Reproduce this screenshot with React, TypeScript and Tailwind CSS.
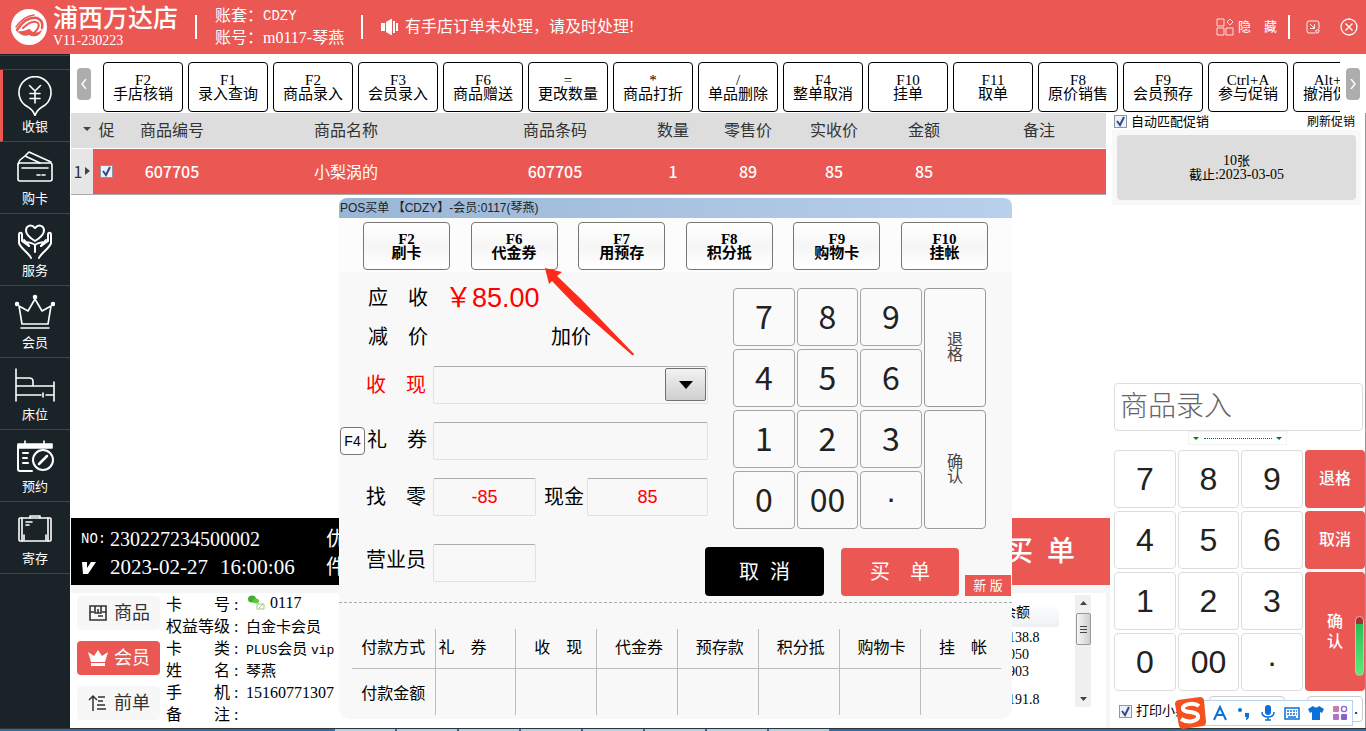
import React, { useState } from 'react';
import clsx from 'clsx';

type NavItem = {
  label: string;
  icon: React.ReactNode;
};

type ShortcutKey = {
  hotkey: string;
  label: string;
};

const NAV_ITEMS: NavItem[] = [
  {
    label: '收银',
    icon: (
      <>
        <path d="M20 39.5c-1.500-4-3.500-6.500-7-8.500A16 16 0 1 1 27 31c-3.500 2-5.500 4.500-7 8.500z" />
        <path d="M14.500 9.500l5.500 5.500 5.500-5.500M15 17.500h10M15 22.500h10M20 15v12" />
      </>
    ),
  },
  {
    label: '购卡',
    icon: (
      <>
        <rect x="3" y="15" width="34" height="18" rx="2" />
        <path d="M3 16l2-4 5-4 15 7M10 8l4-4 22 10M7 20h26" />
        <path d="M22 27h3M27 27h3" />
      </>
    ),
  },
  {
    label: '服务',
    icon: (
      <g strokeWidth="2">
        <path d="M20 21c-5-3-9-6-9-10.500C11 6 16 3.500 20 8c4-4.500 9-2 9 2.500C29 15 25 18 20 21z" />
        <path d="M16 38c-2-5-11-10-12-15V15c0-3 3-3 3 0v6l7 5M24 38c2-5 11-10 12-15V15c0-3-3-3-3 0v6l-7 5" />
        <path d="M20 32v-7c-2-2-6-2.500-9-3M20 25c2-2 6-2.500 9-3M9 20l5 6M31 20l-5 6" />
      </g>
    ),
  },
  {
    label: '会员',
    icon: (
      <>
        <path d="M7 32L4 14l9 5 7-12 7 12 9-5-3 18zM6 36h28" />
        <circle cx="2" cy="12" r="1.500" fill="currentColor" />
        <circle cx="20" cy="5" r="1.500" fill="currentColor" />
        <circle cx="38" cy="12" r="1.500" fill="currentColor" />
      </>
    ),
  },
  {
    label: '床位',
    icon: (
      <path d="M1 5v32M1 14h13q4 0 4 3v5M1 22h38M39 18v19M1 31h25M31 31h8M28 29v4" />
    ),
  },
  {
    label: '预约',
    icon: (
      <>
        <path d="M3 8h34v4H3zM10 5v5M29 5v5" fill="currentColor" />
        <path d="M3 10v23q0 2 2 2h12M8 17h5M8 22h4M8 27h5" strokeWidth="2" />
        <circle cx="28" cy="24" r="10" strokeWidth="2" />
        <path d="M24 28l8-8" strokeWidth="2.500" />
      </>
    ),
  },
  {
    label: '寄存',
    icon: (
      <>
        <rect x="4" y="10" width="32" height="23" rx="1" />
        <path d="M7 10v23M33 10v23M15 10V8h10v2M11 14h6M11 17h3" />
        <path d="M9 27v5M31 27v5" />
      </>
    ),
  },
];

const TOOLBAR: ShortcutKey[] = [
  { hotkey: 'F2', label: '手店核销' },
  { hotkey: 'F1', label: '录入查询' },
  { hotkey: 'F2', label: '商品录入' },
  { hotkey: 'F3', label: '会员录入' },
  { hotkey: 'F6', label: '商品赠送' },
  { hotkey: '=', label: '更改数量' },
  { hotkey: '*', label: '商品打折' },
  { hotkey: '/', label: '单品删除' },
  { hotkey: 'F4', label: '整单取消' },
  { hotkey: 'F10', label: '挂单' },
  { hotkey: 'F11', label: '取单' },
  { hotkey: 'F8', label: '原价销售' },
  { hotkey: 'F9', label: '会员预存' },
  { hotkey: 'Ctrl+A', label: '参与促销' },
  { hotkey: 'Alt+A', label: '撤消促销' },
];

const PAY_METHODS: ShortcutKey[] = [
  { hotkey: 'F2', label: '刷卡' },
  { hotkey: 'F6', label: '代金券' },
  { hotkey: 'F7', label: '用预存' },
  { hotkey: 'F8', label: '积分抵' },
  { hotkey: 'F9', label: '购物卡' },
  { hotkey: 'F10', label: '挂帐' },
];

const PAY_COLUMNS = ['收　现', '代金券', '预存款', '积分抵', '购物卡', '挂　帐'];

const SERIF = "font-['Liberation_Serif','Noto_Sans_CJK_SC',serif]";
const SANS = "font-['Liberation_Sans','Noto_Sans_CJK_SC',sans-serif]";
const MONO = "font-['Liberation_Mono','Noto_Sans_CJK_SC',monospace]";

const Header: React.FC = () => (
  <header className="flex h-[54px] shrink-0 items-center bg-[#eb5752] pr-2 pl-[11px] text-white">
    <svg viewBox="0 0 36 36" className="size-9 shrink-0">
      <circle cx="18" cy="18" r="18" fill="#fff" />
      <g fill="none" stroke="#eb5752" strokeLinecap="round">
        <path d="M5 18C9 12 15 7 23 6" strokeWidth="1.500" />
        <path d="M6 21C11 13 18 8 26 9c5 2 6 6 5 10" strokeWidth="2.500" />
        <path d="M12 19c5-5 11-8 15-5 2 3 0 6-3 9" strokeWidth="2" />
      </g>
      <path d="M6 22c6 1 9-1 12-2 2 0 2 3 5 3 3 1 6 0 8-3-1 7-8 9-13 6-4 2-9 0-12-4z" fill="#eb5752" />
    </svg>
    <div className="ml-[6px] w-[142px]">
      <h1 className="text-[25px] leading-7 font-medium whitespace-nowrap">浦西万达店</h1>
      <p className="text-sm leading-4">V11-230223</p>
    </div>
    <div className="h-6 w-[2px] bg-white" />
    <dl className="ml-[18px] w-[146px] text-base leading-[22px]">
      <div className="flex whitespace-nowrap">
        <dt>账套：</dt>
        <dd className={clsx(MONO, 'text-sm leading-[22px]')}>CDZY</dd>
      </div>
      <div className="flex whitespace-nowrap">
        <dt>账号：</dt>
        <dd>m0117-琴燕</dd>
      </div>
    </dl>
    <div className="h-6 w-[2px] bg-white" />
    <svg viewBox="0 0 18 16" className="ml-[18px] h-4 w-[18px]" fill="currentColor">
      <path d="M0 4h4v8H0zM5 3l5-3h1v16h-1l-5-3zM12 2h2v12h-2zM15 4h2v8h-2z" />
    </svg>
    <p className="ml-[6px] text-base">有手店订单未处理，请及时处理!</p>

    <button type="button" className="ml-auto flex items-center gap-1 text-[13px]">
      <svg viewBox="0 0 18 18" className="size-[18px]" fill="none" stroke="currentColor" strokeOpacity="0.800">
        <path d="M1 1h7v7H1zM1 10h7v7H1zM10 10h7v7h-7zM14 1l3 3-3 3-3-3z" />
      </svg>
      <span className="whitespace-pre">隐　藏</span>
    </button>
    <div className="ml-[11px] h-6 w-[2px] bg-white" />
    <button type="button" aria-label="最小化" className="ml-4">
      <svg viewBox="0 0 14 14" className="size-[14px]" fill="none" stroke="currentColor" strokeOpacity="0.900">
        <path d="M13 9V3q0-2-2-2H3Q1 1 1 3v8q0 2 2 2h6M4 4l4 4M8.500 4v4.500H4M10 13v-3h3v1q0 2-2 2z" />
      </svg>
    </button>
    <button type="button" aria-label="关闭" className="ml-5">
      <svg viewBox="0 0 18 18" className="size-[18px]" fill="none" stroke="currentColor" strokeWidth="1.300">
        <circle cx="9" cy="9" r="8" />
        <path d="M5.500 5.500l7 7M12.500 5.500l-7 7" />
      </svg>
    </button>
  </header>
);

const Sidebar: React.FC = () => (
  <nav className="w-[70px] shrink-0 bg-[#1a2428] pt-px">
    <div className="h-[15px] border-y border-[#3a464b]" />
    {NAV_ITEMS.map((item, index) => (
      <a
        key={item.label}
        href="#"
        className={clsx(
          'flex h-[72px] flex-col items-center border-b border-b-[#3a464b] pt-[6px] text-[13px] text-white',
          index === 0 && 'border-l-[3px] border-l-[#eb5752] pr-[3px]',
        )}
      >
        <svg
          viewBox="0 0 40 40"
          className="size-10"
          fill="none"
          stroke="currentColor"
          strokeWidth="1.600"
          strokeLinecap="round"
          strokeLinejoin="round"
        >
          {item.icon}
        </svg>
        <span className="leading-[22px]">{item.label}</span>
      </a>
    ))}
  </nav>
);

const Toolbar: React.FC = () => (
  <div className="flex h-[59px] shrink-0 items-start bg-white pr-[6px] pl-[7px]">
    <button type="button" aria-label="向左" className="mt-[14px] flex h-8 w-[14px] shrink-0 items-center justify-center rounded bg-[#adadad]">
      <svg viewBox="0 0 6 10" className="h-[10px] w-[6px]" fill="none" stroke="#fff" strokeWidth="1.500">
        <path d="M5 0L1 5l4 5" />
      </svg>
    </button>
    <div className="mt-2 mr-[6px] ml-3 flex min-w-0 flex-1 gap-[5px] overflow-hidden">
      {TOOLBAR.map((key, index) => (
        <button
          key={index}
          type="button"
          className="h-[50px] w-20 shrink-0 rounded border border-black bg-white text-[15px] leading-[14px] text-black"
        >
          <span className="block">{key.hotkey}</span>
          <span className="block whitespace-nowrap">{key.label}</span>
        </button>
      ))}
    </div>
    <button type="button" aria-label="向右" className="mt-[14px] flex h-8 w-[14px] shrink-0 items-center justify-center rounded bg-[#adadad]">
      <svg viewBox="0 0 6 10" className="h-[10px] w-[6px]" fill="none" stroke="#fff" strokeWidth="1.500">
        <path d="M1 0l4 5-4 5" />
      </svg>
    </button>
  </div>
);

const CheckBox: React.FC<{ label: string; hideLabel?: boolean }> = ({ label, hideLabel }) => {
  const [checked, setChecked] = useState(true);
  return (
    <label className="inline-flex items-center gap-1">
      <span className="relative inline-flex size-[13px]">
        <input
          type="checkbox"
          aria-label={label}
          checked={checked}
          onChange={(e) => setChecked(e.target.checked)}
          className="size-[13px] appearance-none border border-[#8a97a5] bg-[#eef1f5]"
        />
        {checked && (
          <svg viewBox="0 0 13 13" className="pointer-events-none absolute inset-0" fill="none" stroke="#34488f" strokeWidth="2">
            <path d="M3 6l3 4 4-8" />
          </svg>
        )}
      </span>
      {!hideLabel && <span className="whitespace-nowrap">{label}</span>}
    </label>
  );
};

const OrderTable: React.FC = () => (
  <table className="mr-1 table-fixed border-collapse text-base text-[#333]">
    <colgroup>
      <col className="w-[22px]" />
      <col className="w-[27px]" />
      <col className="w-[104px]" />
      <col />
      <col className="w-[174px]" />
      <col className="w-[62px]" />
      <col className="w-[88px]" />
      <col className="w-[84px]" />
      <col className="w-[96px]" />
      <col className="w-[134px]" />
    </colgroup>
    <thead>
      <tr className="h-[35px] border-b border-white bg-[#ddd] [&>th]:p-0 [&>th]:pt-[2px] [&>th]:font-normal">
        <th>
          <svg viewBox="0 0 8 4" className="mr-[2px] mb-1 ml-auto h-1 w-2">
            <path d="M0 0h8L4 4z" fill="#444" />
          </svg>
        </th>
        <th>促</th>
        <th>商品编号</th>
        <th>商品名称</th>
        <th>商品条码</th>
        <th>数量</th>
        <th>零售价</th>
        <th>实收价</th>
        <th>金额</th>
        <th>备注</th>
      </tr>
    </thead>
    <tbody>
      <tr className="h-[46px] border-b border-[#aaa] bg-[#eb5752] text-center text-white [&>td]:p-0 [&>td]:font-['Noto_Sans_CJK_SC',sans-serif]">
        <td className="bg-[#e6e6e6] text-[#333]">
          <span className="flex items-center justify-center gap-[3px]">
            1
            <svg viewBox="0 0 5 8" className="h-2 w-[5px]">
              <path d="M0 0l5 4-5 4z" fill="#444" />
            </svg>
          </span>
        </td>
        <td>
          <CheckBox label="促" hideLabel />
        </td>
        <td className="font-medium">607705</td>
        <td>小梨涡的</td>
        <td className="font-medium">607705</td>
        <td className="font-medium">1</td>
        <td className="font-medium">89</td>
        <td className="font-medium">85</td>
        <td className="font-medium">85</td>
        <td />
      </tr>
    </tbody>
  </table>
);

const StatusBar: React.FC = () => (
  <div className="flex h-[67px] shrink-0 bg-black text-xl text-white">
    <div className="flex-1 pt-[7px] pl-[10px] leading-7">
      <div className="flex">
        <span className={clsx(MONO, 'w-[29px] text-sm leading-7')}>NO:</span>
        <span className="w-[216px]">230227234500002</span>
        <span>优惠</span>
      </div>
      <div className="flex items-center">
        <span className="w-[29px]">
          <svg viewBox="0 0 14 13" className="ml-px h-[13px] w-[14px]" fill="currentColor">
            <path d="M0 1h5v6l4-6h5L6 13H1z" />
          </svg>
        </span>
        <span className="flex w-[216px] gap-3 text-[21px] leading-7">
          <span>2023-02-27</span>
          <span>16:00:06</span>
        </span>
        <span>件数</span>
      </div>
    </div>
    <button type="button" className="w-[140px] bg-[#eb5752] text-[28px] font-medium whitespace-pre">
      买  单
    </button>
  </div>
);

const MEMBER_ROWS: { label: string; value: React.ReactNode }[] = [
  {
    label: '卡　　号',
    value: (
      <span className="flex items-center gap-1">
        <svg viewBox="0 0 18 16" className="ml-[2px] h-4 w-[18px]">
          <ellipse cx="4" cy="4" rx="4" ry="3.500" fill="#3fae2a" />
          <ellipse cx="8" cy="6" rx="3" ry="2.500" fill="#62c24a" />
          <path d="M9 9h7v5H9zM11 13l4-4" fill="none" stroke="#9dc48c" />
        </svg>
        <span className="text-base leading-[18px]">0117</span>
      </span>
    ),
  },
  { label: '权益等级', value: '白金卡会员' },
  {
    label: '卡　　类',
    value: (
      <>
        <span className={clsx(MONO, 'text-[13px]')}>PLUS</span>会员 <span className={clsx(MONO, 'text-[13px]')}>vip</span>
      </>
    ),
  },
  { label: '姓　　名', value: '琴燕' },
  { label: '手　　机', value: <span className="text-base leading-[22px]">15160771307</span> },
  { label: '备　　注', value: '' },
];

const MemberPanel: React.FC = () => (
  <div className="mt-2 mr-1 flex h-[135px] shrink-0 bg-white pr-[15px] pl-[6px]">
    <div className="flex w-[83px] flex-col gap-[11px] pt-[3px] text-lg text-[#333]">
      <button type="button" className="flex h-[34px] items-center gap-[6px] rounded bg-[#f7f7f7] pl-[11px]">
        <svg viewBox="0 0 20 18" className="h-[18px] w-5" fill="none" stroke="currentColor" strokeWidth="1.600">
          <path d="M2 2h16v14H2zM2 8h4M14 8h4M7 2v7h3V5M13 2v7h-3M10 12h5" />
        </svg>
        商品
      </button>
      <button type="button" className="flex h-[34px] items-center gap-[6px] rounded bg-[#eb5752] pl-[11px] text-white">
        <svg viewBox="0 0 20 18" className="h-[18px] w-5" fill="currentColor">
          <path d="M0 3l6 4 4-6 4 6 6-4-3 10H3zM3 14h14v3H3z" />
        </svg>
        会员
      </button>
      <button type="button" className="flex h-[34px] items-center gap-[6px] rounded bg-[#f7f7f7] pl-[11px]">
        <svg viewBox="0 0 20 18" className="h-[18px] w-5" fill="none" stroke="currentColor" strokeWidth="1.500">
          <path d="M1 6l4-4 4 4M5 2v15M10 3h7M10 7h5M9 11h8M9 15h9" />
        </svg>
        前单
      </button>
    </div>
    <dl className="ml-[6px] w-[220px] pt-px text-[15px] leading-[22px] text-black">
      {MEMBER_ROWS.map((row) => (
        <div key={row.label} className="flex h-[22px] whitespace-nowrap">
          <dt className="w-[80px] text-base leading-[22px]">
            {row.label}
            <span className="pl-1">:</span>
          </dt>
          <dd>{row.value}</dd>
        </div>
      ))}
    </dl>
    <div className="ml-auto w-[57px] pt-[11px] text-sm leading-[17px] text-black">
      <div className="h-[23px] bg-linear-to-b from-white to-[#eef0f3] leading-[18px]">余额</div>
      <div className="pt-[2px] pl-[6px]">
        <p>138.8</p>
        <p>050</p>
        <p>903</p>
        <p className="pt-[11px]">191.8</p>
      </div>
    </div>
    <div className="mt-[2px] ml-4 flex h-[112px] w-4 flex-col items-center bg-[#f0f0f0] py-[6px]">
      <svg viewBox="0 0 7 4" className="h-1 w-[7px] shrink-0">
        <path d="M0 4l3.500-4L7 4z" fill="#444" />
      </svg>
      <div className="mt-2 flex h-8 w-[15px] flex-col items-center justify-center gap-[2px] rounded-xs border border-[#999] bg-linear-to-r from-[#f5f5f5] to-[#cfcfcf]">
        <i className="h-px w-[7px] bg-[#444]" />
        <i className="h-px w-[7px] bg-[#444]" />
        <i className="h-px w-[7px] bg-[#444]" />
      </div>
      <svg viewBox="0 0 7 4" className="mt-auto h-1 w-[7px] shrink-0">
        <path d="M0 0h7L3.500 4z" fill="#444" />
      </svg>
    </div>
  </div>
);

const RightPanel: React.FC = () => {
  const keyStyle = 'rounded border border-[#ddd] bg-white text-[32px] text-[#222]';
  const redKey = 'rounded bg-[#eb5752] text-base font-medium text-white';
  return (
    <aside className="flex w-[256px] shrink-0 flex-col border-r border-[#999] bg-white pl-[2px] text-black">
      <div className="flex h-[17px] items-center justify-between pr-[10px] pl-[2px] text-[13px]">
        <CheckBox label="自动匹配促销" />
        <button type="button" className="text-xs">刷新促销</button>
      </div>
      <div className="mr-1 bg-[#f8f8f8] p-[5px]">
        <button type="button" className="h-[65px] w-full rounded bg-[#ddd] text-sm leading-[14px]">
          <span className="block">10<span className="text-[13px]">张</span></span>
          <span className="block"><span className="text-[13px]">截止</span>:2023-03-05</span>
        </button>
      </div>

      <div className="mt-auto pl-[2px]">
        <input
          type="text"
          aria-label="商品录入"
          placeholder="商品录入"
          className="h-12 w-[249px] rounded border border-[#ddd] bg-white px-[5px] text-[28px] font-light placeholder:text-[#666]"
        />
        <div className="ml-[74px] flex h-[14px] w-[99px] items-center justify-between border border-[#f2f2f2] px-1">
          <svg viewBox="0 0 6 3" className="h-[3px] w-[6px]"><path d="M0 0h6L3 3z" fill="#0a7d12" /></svg>
          <i className="w-[68px] border-t border-dotted border-[#0a7d12]" />
          <svg viewBox="0 0 6 3" className="h-[3px] w-[6px]"><path d="M0 0h6L3 3z" fill="#0a7d12" /></svg>
        </div>
        <div className={clsx('mt-[5px] grid auto-rows-[58px] grid-cols-[62px_61px_62px_1fr] gap-x-[2px] gap-y-[3px]', SANS)}>
          <button type="button" className={keyStyle}>7</button>
          <button type="button" className={keyStyle}>8</button>
          <button type="button" className={keyStyle}>9</button>
          <button type="button" className={redKey}>退格</button>
          <button type="button" className={keyStyle}>4</button>
          <button type="button" className={keyStyle}>5</button>
          <button type="button" className={keyStyle}>6</button>
          <button type="button" className={redKey}>取消</button>
          <button type="button" className={keyStyle}>1</button>
          <button type="button" className={keyStyle}>2</button>
          <button type="button" className={keyStyle}>3</button>
          <button type="button" className={clsx(redKey, 'row-span-2 px-5 leading-5')}>确认</button>
          <button type="button" className={keyStyle}>0</button>
          <button type="button" className={keyStyle}>00</button>
          <button type="button" className={keyStyle}>·</button>
        </div>
        <div className="flex h-[37px] items-start pt-[5px]">
          <div className="ml-[5px] flex h-[30px] w-[90px] items-center text-[13px]">
            <CheckBox label="打印小票" />
          </div>
          <button type="button" aria-label="交班" className="h-[26px] w-[76px] rounded border border-[#ccc] bg-white" />
          <button type="button" aria-label="更多" className="mr-[2px] ml-auto h-[26px] w-[56px] rounded border border-[#ccc] bg-white pr-1 text-right text-base">.</button>
        </div>
      </div>
    </aside>
  );
};

const PaymentDialog: React.FC = () => {
  const [change, setChange] = useState('-85');
  const [cash, setCash] = useState('85');
  const label = 'w-[67px] shrink-0 whitespace-pre';
  const field =
    'h-[38px] rounded-xs border border-[#dfe1ea] border-t-[#abadb3] bg-[#f8f8f8] text-center text-lg text-[#f00]';
  const keyStyle = 'rounded border border-[#a5a5a5] bg-[#fafafa] pb-1 text-[32px] text-[#222]';
  const sideKey = 'row-span-2 rounded border border-[#999] bg-[#fafafa] px-5 pb-1 text-base leading-[15px] text-[#444]';

  return (
    <section
      role="dialog"
      aria-label="POS买单"
      className={clsx('absolute top-[198px] left-[339px] w-[673px] rounded-xl bg-[#f8f8f8] text-black', SANS)}
    >
      <h2 className="h-5 rounded-t-lg bg-linear-to-r from-[#9ab6d6] to-[#b9d0ed] pl-px text-[12px] leading-5 text-[#222]">
        POS买单 【CDZY】-会员:0117(琴燕)
      </h2>
      <div className={clsx('flex justify-between bg-[#fcfcfc] px-6 pt-1 pb-[2px]', SERIF)}>
        {PAY_METHODS.map((key) => (
          <button
            key={key.hotkey}
            type="button"
            className="h-12 w-[87px] rounded border border-[#777] bg-linear-to-b from-white via-[#f6f6f6] to-white text-[15px] leading-[14px] font-bold"
          >
            <span className="block">{key.hotkey}</span>
            <span className="block">{key.label}</span>
          </button>
        ))}
      </div>

      <div className="flex">
        <div className="w-[369px] pt-2 pl-[27px] text-[20px]">
          <div className="flex h-9 items-center pl-[2px]">
            <span className={label}>应　收</span>
            <span className="pl-[10px] text-[27px] text-[#f00]">￥85.00</span>
          </div>
          <div className="flex h-[42px] items-center pl-[2px]">
            <span className={label}>减　价</span>
            <span className="ml-[116px]">加价</span>
          </div>
          <div className="mt-2 flex items-center">
            <label htmlFor="pay-cash" className={clsx(label, 'text-[#f00]')}>收　现</label>
            <span className="relative flex flex-1">
              <select
                id="pay-cash"
                className="h-[38px] w-full appearance-none rounded-xs border border-[#dfe1ea] border-t-[#abadb3] bg-[#f8f8f8]"
              />
              <span className="pointer-events-none absolute top-[2px] right-[2px] flex h-[33px] w-[41px] items-center justify-center rounded-xs border border-[#707070] bg-linear-to-b from-[#f2f2f2] to-[#cfcfcf]">
                <svg viewBox="0 0 14 8" className="h-2 w-[14px]"><path d="M0 0h14L7 8z" /></svg>
              </span>
            </span>
          </div>
          <div className="mt-[18px] -ml-[27px] flex items-center">
            <button type="button" className="mr-px ml-px h-7 w-[25px] shrink-0 rounded border border-[#777] bg-[#fcfcfc] text-sm">F4</button>
            <label htmlFor="pay-gift" className={clsx(label, 'pb-[2px] pl-px')}>礼　券</label>
            <input id="pay-gift" type="text" className={clsx(field, 'min-w-0 flex-1')} />
          </div>
          <div className="mt-[18px] flex items-center">
            <label htmlFor="pay-change" className={label}>找　零</label>
            <input
              id="pay-change"
              type="text"
              value={change}
              onChange={(e) => setChange(e.target.value)}
              className={clsx(field, 'w-[103px]')}
            />
            <label htmlFor="pay-money" className="w-[51px] pl-2">现金</label>
            <input
              id="pay-money"
              type="text"
              value={cash}
              onChange={(e) => setCash(e.target.value)}
              className={clsx(field, 'min-w-0 flex-1')}
            />
          </div>
        </div>

        <div className="ml-[25px] grid h-[257px] grid-cols-[62px_61px_62px_62px] auto-rows-[58px] gap-x-[2px] gap-y-[3px] pt-4 font-['Noto_Sans_CJK_SC',sans-serif]">
          <button type="button" className={keyStyle}>7</button>
          <button type="button" className={keyStyle}>8</button>
          <button type="button" className={keyStyle}>9</button>
          <button type="button" className={sideKey}>退格</button>
          <button type="button" className={keyStyle}>4</button>
          <button type="button" className={keyStyle}>5</button>
          <button type="button" className={keyStyle}>6</button>
          <button type="button" className={keyStyle}>1</button>
          <button type="button" className={keyStyle}>2</button>
          <button type="button" className={keyStyle}>3</button>
          <button type="button" className={sideKey}>确认</button>
          <button type="button" className={keyStyle}>0</button>
          <button type="button" className={keyStyle}>00</button>
          <button type="button" className={clsx(keyStyle, SANS)}>·</button>
        </div>
      </div>

      <div className="flex h-[74px] items-start border-b border-dashed border-[#aaa] pt-[15px] pr-px pl-[27px] text-[20px]">
        <div className="flex items-start">
          <label htmlFor="pay-clerk" className={clsx(label, 'leading-8')}>营业员</label>
          <input id="pay-clerk" type="text" className={clsx(field, 'w-[103px]')} />
        </div>
        <div className="ml-auto flex items-end pt-[3px] text-white">
          <button type="button" className="h-[49px] w-[119px] rounded bg-black whitespace-pre">取  消</button>
          <button type="button" className="ml-[17px] h-12 w-[118px] rounded bg-[#eb5752] whitespace-pre">买　单</button>
          <button type="button" className="ml-[6px] h-[21px] w-[46px] bg-[#eb5752] text-[13px] whitespace-pre">新 版</button>
        </div>
      </div>

      <table className="mx-[13px] mt-[26px] mb-[4px] w-[649px] table-fixed border-collapse text-right text-base [&_th]:font-normal">
        <colgroup>
          <col className="w-[83px]" />
        </colgroup>
        <thead>
          <tr className="h-[39px] border-b border-[#bbb]">
            <th className="border-r border-[#bbb] p-0 pb-px text-center">付款方式</th>
            <th className="border-r border-[#bbb] p-0 pb-px pl-[3px] text-left">礼　券</th>
            {PAY_COLUMNS.map((name) => (
              <th key={name} className="border-r border-[#bbb] p-0 pr-[14px] pb-px last:border-r-0">{name}</th>
            ))}
          </tr>
        </thead>
        <tbody>
          <tr className="h-[47px]">
            <th scope="row" className="border-r border-[#bbb] p-0 pt-1 text-center">付款金额</th>
            <td className="border-r border-[#bbb]" />
            {PAY_COLUMNS.map((name) => (
              <td key={name} className="border-r border-[#bbb] last:border-r-0" />
            ))}
          </tr>
        </tbody>
      </table>
    </section>
  );
};

// Floating input method bar, docked over the lower right corner
const ImeBar: React.FC = () => (
  <div className="absolute right-[13px] bottom-[3px] flex h-[30px] items-center">
    <svg viewBox="0 0 32 32" className="z-10 -mr-2 h-8 w-8">
      <path d="M4 3l22-3q3 0 4 3l2 22q0 3-3 4L9 32q-3 0-4-3L1 7q0-3 3-4z" fill="#f4511e" />
      <path
        d="M25 9C20 5 8 7 9 12c1 5 14 1 15 7 1 6-11 7-17 3"
        fill="none"
        stroke="#fff"
        strokeWidth="4"
      />
    </svg>
    <div className="flex h-[26px] items-center gap-[8px] border border-[#b8d4f0] bg-white pr-1 pl-[13px] text-[#0b6fd8]">
      <svg viewBox="0 0 16 16" className="size-4" fill="none" stroke="currentColor" strokeWidth="2">
        <path d="M2 15L8 2l6 13M5 10h6" />
      </svg>
      <svg viewBox="0 0 16 16" className="size-4" fill="currentColor">
        <circle cx="4" cy="5" r="2" />
        <path d="M9 8h4v3q0 3-3 4v-2l1-1H9z" />
      </svg>
      <svg viewBox="0 0 16 16" className="size-4">
        <rect x="5" y="0" width="6" height="10" rx="3" fill="currentColor" />
        <path d="M2 7q0 5 6 5t6-5M8 12v3M5 15h6" fill="none" stroke="currentColor" strokeWidth="1.500" />
      </svg>
      <svg viewBox="0 0 16 16" className="size-4" fill="none" stroke="currentColor" strokeWidth="1.500">
        <path d="M1 3h14v11H1z" />
        <path d="M3 6h10M3 9h10" strokeDasharray="2 1" />
        <path d="M4 12h8" />
      </svg>
      <svg viewBox="0 0 16 16" className="size-4" fill="currentColor">
        <path d="M5 1q3 3 6 0l5 3-2 4-2-1v8H4V7L2 8 0 4z" />
      </svg>
      <svg viewBox="0 0 16 16" className="size-4">
        <rect x="1" y="1" width="6" height="6" rx="1" fill="#c97ab0" />
        <rect x="9.500" y="1.500" width="5" height="5" rx="2" fill="none" stroke="#8a6fe0" strokeWidth="1.500" />
        <rect x="1" y="9" width="6" height="6" rx="1" fill="#b077c9" />
        <rect x="9" y="9" width="6" height="6" rx="1" fill="#8a5fd0" />
      </svg>
    </div>
  </div>
);

const App: React.FC = () => (
  <div className={clsx('relative flex min-h-screen flex-col overflow-hidden bg-white', SERIF)}>
    <Header />
    <div className="flex flex-1">
      <Sidebar />
      <div className="flex min-w-0 flex-1 flex-col">
        <Toolbar />
        <div className="flex flex-1">
          <main className="ml-px flex min-w-0 flex-1 flex-col">
            <OrderTable />
            <div className="flex-1" />
            <StatusBar />
            <div className="bg-[#f4f5f7]">
              <MemberPanel />
            </div>
          </main>
          <RightPanel />
        </div>
      </div>
    </div>
    <footer className="flex h-[3px] border-t border-[#333] bg-[#2f6ea5]">
      <div className="ml-[335px] flex gap-[2px] *:w-[60px] *:bg-[#a9d3ee]">
        <i /><i /><i /><i /><i /><i /><i /><i />
      </div>
    </footer>

    <PaymentDialog />

    <svg viewBox="0 0 90 90" className="pointer-events-none absolute top-[267px] left-[544px] size-[90px]">
      <path d="M1 1l17 4-5 4 24 23 53 55q0 2-2 1L31 38 8 14l-3 3z" fill="#ff2a1a" />
    </svg>
    <div className="absolute top-[616px] right-[2px] h-[60px] w-[9px] rounded-full border border-[#f0b0a8] bg-linear-to-b from-[#a03430] from-12% via-[#25c05a] via-12% to-[#5fe87a]" />
    <ImeBar />
  </div>
);

export default App;
